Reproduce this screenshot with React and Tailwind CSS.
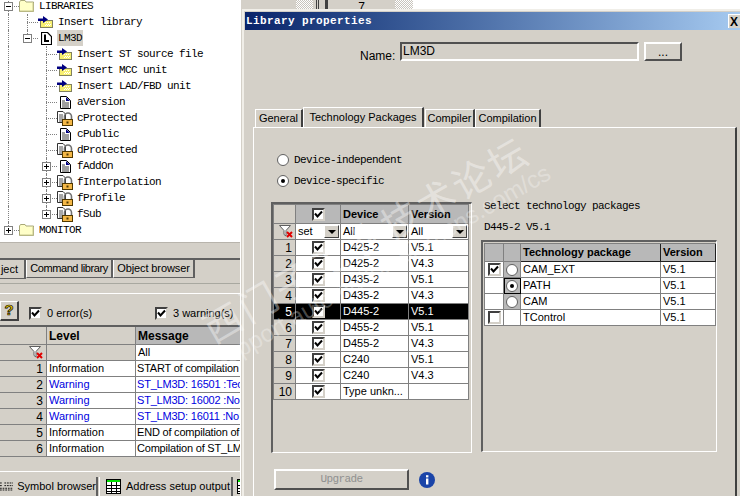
import React from "react";

const MONO = "font-['Liberation_Mono',monospace] text-[11px] tracking-[-0.6px] text-black";

const FolderIcon = () => (
  <svg width="15" height="12" viewBox="0 0 15 12" className="block">
    <path d="M0.5 2 L1.5 0.5 H6 L7 2 H14.5 V11.5 H0.5 Z" fill="#ffffc8" stroke="#a8a878" />
    <path d="M14 3 V11 H1" fill="none" stroke="#c8c890" />
  </svg>
);

const InsertIcon = () => (
  <svg width="15" height="12" viewBox="0 0 15 12" className="block">
    <rect x="2.5" y="4.5" width="12" height="7" fill="#f8f070" stroke="#808060" />
    <path d="M7 6h1v1H7zM9 6h1v1H9zM11 6h1v1h-1zM8 8h1v1H8zM10 8h1v1h-1zM12 8h1v1h-1zM7 9h1v1H7zM9 9h1v1H9zM11 9h1v1h-1z" fill="#ffffff" />
    <path d="M0 2.5 H5 V0 L10 3.5 L5 7 V5 H0 Z" fill="#000080" />
  </svg>
);

const DocIcon = () => (
  <svg width="11" height="13" viewBox="0 0 11 13" className="block ml-[3px]">
    <path d="M0.5 0.5 H6.5 L10.5 4.5 V12.5 H0.5 Z" fill="#ffffff" stroke="#000000" />
    <path d="M6 1 L10 5 H6 Z" fill="#000080" />
    <path d="M2 5h3M2 7h7M2 9h7M2 11h7" stroke="#404040" />
  </svg>
);

const LockIcon = () => (
  <svg width="16" height="15" viewBox="0 0 16 15" className="block">
    <path d="M0.5 0.5 H6 L8.5 3 V11.5 H0.5 Z" fill="#ffffff" stroke="#303030" />
    <path d="M2 4h4M2 6h4M2 8h4M2 10h3" stroke="#505050" />
    <path d="M7.5 8 V5.5 A3.5 3.5 0 0 1 14.5 5.5 V8" fill="none" stroke="#707070" strokeWidth="1.6" />
    <rect x="5.5" y="8.5" width="10" height="6" fill="#f4b848" stroke="#503800" />
    <rect x="9.5" y="10.5" width="2" height="2" fill="#503800" />
  </svg>
);

const LibIcon = () => (
  <svg width="11" height="13" viewBox="0 0 11 13" className="block ml-[3px]">
    <path d="M0.5 0.5 H6.5 L10.5 4.5 V12.5 H0.5 Z" fill="#ffffff" stroke="#000000" strokeWidth="1.2" />
    <path d="M4 2.5 V9 H8" fill="none" stroke="#000000" strokeWidth="2" />
  </svg>
);

const Expander = ({ open }) => (
  <div className="absolute left-[4px] top-[4px] z-10 flex size-[9px] items-center justify-center border border-[#808080] bg-white">
    <svg width="7" height="7" viewBox="0 0 7 7" className="block">
      <path d={open ? "M1 3.5h5" : "M1 3.5h5M3.5 1v5"} stroke="#000000" />
    </svg>
  </div>
);

const TreeRow = ({ guides = [], last, exp, icon, label, sel }) => (
  <div className="flex h-4 items-center">
    {guides.map((g, i) => (
      <div key={i} className="h-4 w-[19px] shrink-0">
        {g && <div className="ml-[8px] h-4 border-l border-dotted border-[#808080]" />}
      </div>
    ))}
    <div className="relative h-4 w-[19px] shrink-0">
      <div className={"ml-[8px] border-l border-dotted border-[#808080] " + (last ? "h-2" : "h-4")} />
      <div className="absolute left-[8px] top-[8px] w-[11px] border-t border-dotted border-[#808080]" />
      {exp && <Expander open={exp === "open"} />}
    </div>
    <div className="w-[20px] shrink-0">{icon}</div>
    <div className={"flex h-4 items-center pr-px pt-px " + MONO + (sel ? " -ml-px bg-[#d4d0c8] pl-px" : "")}>{label}</div>
  </div>
);

const Check = ({ on = true }) => (
  <div className="size-[13px] border-2 border-b-[#d4d0c8] border-l-[#404040] border-r-[#d4d0c8] border-t-[#404040] bg-white">
    {on && (
      <svg width="9" height="9" viewBox="0 0 9 9" className="block">
        <path d="M1 3.5 L3.5 6.5 L8 1.5" fill="none" stroke="#000000" strokeWidth="2" />
      </svg>
    )}
  </div>
);

const Radio = ({ on }) => (
  <div className="flex size-[12px] items-center justify-center rounded-full border border-[#606060] bg-white">
    {on && <div className="size-[4px] rounded-full bg-black" />}
  </div>
);

const FilterIcon = () => (
  <svg width="15" height="13" viewBox="0 0 15 13" className="block">
    <path d="M0.5 0.5 H11.5 L7 5.5 V11 L5 9.5 V5.5 Z" fill="#ffffff" stroke="#606060" />
    <path d="M8 7 L13 12 M13 7 L8 12" stroke="#e00000" strokeWidth="2" />
  </svg>
);

const Drop = () => (
  <div className="flex h-[13px] w-[15px] shrink-0 items-center justify-center border border-b-[#404040] border-l-white border-r-[#404040] border-t-white bg-[#d4d0c8]">
    <div className="size-0 border-x-[4px] border-t-[4px] border-x-transparent border-t-black" />
  </div>
);

const devices = [
  ["1", "D425-2", "V5.1"],
  ["2", "D425-2", "V4.3"],
  ["3", "D435-2", "V5.1"],
  ["4", "D435-2", "V4.3"],
  ["5", "D445-2", "V5.1"],
  ["6", "D455-2", "V5.1"],
  ["7", "D455-2", "V4.3"],
  ["8", "C240", "V5.1"],
  ["9", "C240", "V4.3"],
  ["10", "Type unkn...", ""],
];

const messages = [
  ["1", "Information", "START of compilation", false],
  ["2", "Warning", "ST_LM3D: 16501 :Tec", true],
  ["3", "Warning", "ST_LM3D: 16002 :No", true],
  ["4", "Warning", "ST_LM3D: 16011 :No", true],
  ["5", "Information", "END of compilation of", false],
  ["6", "Information", "Compilation of ST_LM", false],
];

const packages = [
  ["CAM_EXT", "check", "off"],
  ["PATH", "", "on"],
  ["CAM", "", "off"],
  ["TControl", "empty", ""],
];

const gridLine = "border-b border-r border-[#808080]";

const DeviceTable = () => (
  <div className="w-[196px] border-l border-t border-[#808080]">
    <div className="flex h-[19px] font-bold">
      <div className={"w-[22px] bg-[#d4d0c8] " + gridLine} />
      <div className={"flex w-[45px] items-center justify-center bg-[#b8b8b8] " + gridLine}><Check /></div>
      <div className={"flex w-[68px] items-center bg-[#b8b8b8] pl-[2px] " + gridLine}>Device</div>
      <div className={"flex w-[60px] items-center bg-[#b8b8b8] pl-[2px] " + gridLine}>Version</div>
    </div>
    <div className="flex h-4">
      <div className={"flex w-[22px] items-center justify-end bg-[#d4d0c8] pr-px " + gridLine}><FilterIcon /></div>
      <div className={"flex w-[45px] items-center justify-between bg-white pl-[2px] pr-px " + gridLine}>set<Drop /></div>
      <div className={"flex w-[68px] items-center justify-between bg-white pl-[2px] pr-px " + gridLine}>All<Drop /></div>
      <div className={"flex w-[60px] items-center justify-between bg-white pl-[2px] pr-px " + gridLine}>All<Drop /></div>
    </div>
    {devices.map(([n, dev, ver]) => {
      const sel = n === "5";
      return (
        <div key={n} className={"flex h-4 " + (sel ? "bg-black text-white" : "bg-white")}>
          <div className={"flex w-[22px] items-center justify-end pr-[3px] text-[12px] " + gridLine + (sel ? "" : " bg-[#d4d0c8]")}>{n}</div>
          <div className={"flex w-[45px] items-center justify-center " + gridLine}><Check /></div>
          <div className={"flex w-[68px] items-center pl-[2px] " + gridLine}>{dev}</div>
          <div className={"flex w-[60px] items-center pl-[2px] " + gridLine}>{ver}</div>
        </div>
      );
    })}
  </div>
);

const PackageTable = () => (
  <div className="ml-px mt-px w-[232px] border-l border-t border-[#808080]">
    <div className="flex h-[18px] font-bold">
      <div className={"w-[19px] bg-[#b8b8b8] " + gridLine} />
      <div className={"w-[17px] bg-[#b8b8b8] " + gridLine} />
      <div className="flex w-[140px] items-center border-b border-r border-[#202020] bg-[#b8b8b8] pl-[2px]">Technology package</div>
      <div className="flex w-[55px] items-center border-b border-r border-[#202020] bg-[#b8b8b8] pl-[2px]">Version</div>
    </div>
    {packages.map(([name, chk, radio]) => (
      <div key={name} className="flex h-4 bg-white">
        <div className={"flex w-[19px] items-center justify-center " + gridLine}>
          {chk && <Check on={chk === "check"} />}
        </div>
        <div className={"flex w-[17px] items-center justify-center " + gridLine + (radio ? " bg-[#b8b8b8]" : "") + (radio === "on" ? " outline outline-1 -outline-offset-1 outline-black" : "")}>
          {radio && <Radio on={radio === "on"} />}
        </div>
        <div className={"flex w-[140px] items-center pl-[2px] " + gridLine}>{name}</div>
        <div className={"flex w-[55px] items-center pl-[2px] " + gridLine}>V5.1</div>
      </div>
    ))}
  </div>
);

const MessageTable = () => (
  <div>
    <div className="flex h-[20px] border-t-2 border-[#606060] font-bold text-[12px]">
      <div className={"w-[47px] " + gridLine} />
      <div className={"flex w-[89px] items-center pl-[2px] " + gridLine}>Level</div>
      <div className="flex flex-1 items-center border-b border-[#808080] bg-[#b8b8b8] pl-[2px]">Message</div>
    </div>
    <div className="flex h-4">
      <div className={"flex w-[47px] items-center justify-end pr-[2px] " + gridLine}><FilterIcon /></div>
      <div className={"w-[89px] " + gridLine} />
      <div className="flex flex-1 items-center border-b border-[#808080] bg-white pl-[2px]">All</div>
    </div>
    {messages.map(([n, level, msg, warn]) => (
      <div key={n} className="flex h-4">
        <div className={"flex w-[47px] items-center justify-end pr-[3px] text-[12px] " + gridLine}>{n}</div>
        <div className={"flex w-[89px] items-center bg-white pl-[2px] " + gridLine + (warn ? " text-[#0000e0]" : "")}>{level}</div>
        <div className={"flex-1 overflow-hidden whitespace-nowrap border-b border-[#808080] bg-white pl-px leading-[15px] tracking-[-0.2px]" + (warn ? " text-[#0000e0]" : "")}>{msg}</div>
      </div>
    ))}
  </div>
);

const SymbolIcon = () => (
  <svg width="15" height="11" viewBox="0 0 15 11" className="block">
    <path d="M0 1.5h3M5 1.5h10M0 4.5h3M5 4.5h10M0 7.5h15M0 9.5h15" stroke="#000000" strokeDasharray="2 1" />
  </svg>
);

const AddressIcon = ({ width = 15 }) => (
  <svg width={width} height="15" viewBox={"0 0 " + width + " 15"} className="block">
    <rect x="0.5" y="0.5" width="14" height="14" fill="#ffffff" stroke="#000000" />
    <rect x="1" y="1" width="13" height="2" fill="#00e000" />
    <path d="M1 6.5h13M1 9.5h13M1 12.5h13M5.5 3v11M10.5 3v11" stroke="#000000" />
  </svg>
);

const Tree = () => (
  <div className="-mt-[2px]">
    <TreeRow exp="open" icon={<FolderIcon />} label="LIBRARIES" />
    <TreeRow guides={[true]} icon={<InsertIcon />} label="Insert library" />
    <TreeRow guides={[true]} last exp="open" icon={<LibIcon />} label="LM3D" sel />
    <TreeRow guides={[true, false]} icon={<InsertIcon />} label="Insert ST source file" />
    <TreeRow guides={[true, false]} icon={<InsertIcon />} label="Insert MCC unit" />
    <TreeRow guides={[true, false]} icon={<InsertIcon />} label="Insert LAD/FBD unit" />
    <TreeRow guides={[true, false]} icon={<DocIcon />} label="aVersion" />
    <TreeRow guides={[true, false]} icon={<LockIcon />} label="cProtected" />
    <TreeRow guides={[true, false]} icon={<DocIcon />} label="cPublic" />
    <TreeRow guides={[true, false]} icon={<LockIcon />} label="dProtected" />
    <TreeRow guides={[true, false]} exp="closed" icon={<DocIcon />} label="fAddOn" />
    <TreeRow guides={[true, false]} exp="closed" icon={<LockIcon />} label="fInterpolation" />
    <TreeRow guides={[true, false]} exp="closed" icon={<LockIcon />} label="fProfile" />
    <TreeRow guides={[true, false]} last exp="closed" icon={<LockIcon />} label="fSub" />
    <TreeRow last exp="closed" icon={<FolderIcon />} label="MONITOR" />
  </div>
);

const LeftPane = () => (
  <div className="flex w-[241px] shrink-0 flex-col overflow-hidden border-r border-white">
    <div className="h-[243px] shrink-0 overflow-hidden border-b border-[#b8b4ac] bg-white">
      <Tree />
    </div>
    <div className="mt-[15px] flex h-[21px] shrink-0 items-start overflow-hidden whitespace-nowrap border-t-2 border-[#606060]">
      <div className="flex h-[20px] w-[26px] shrink-0 items-center justify-end overflow-hidden border-b-2 border-r-2 border-[#606060] pr-[6px]">ject</div>
      <div className="flex h-[18px] w-[87px] shrink-0 items-center justify-center border-b border-l border-r-2 border-b-[#606060] border-l-white border-r-[#606060] tracking-[-0.4px]">Command library</div>
      <div className="flex h-[18px] w-[82px] shrink-0 items-center justify-center border-b border-l border-r-2 border-b-[#606060] border-l-white border-r-[#606060] tracking-[-0.1px]">Object browser</div>
    </div>
    <div className="mt-[4px] h-px shrink-0 bg-[#a8a8a0]" />
    <div className="mt-[9px] h-px shrink-0 bg-white" />
    <div className="mt-[7px] flex h-[20px] shrink-0 items-center">
      <div className="flex h-[20px] w-[19px] items-center justify-center border border-b-2 border-r-2 border-b-[#404040] border-l-white border-r-[#404040] border-t-white text-[15px] font-bold text-[#f0d000] [-webkit-text-stroke:0.7px_#000000]">?</div>
      <div className="ml-[10px] mt-[4px] flex w-[125px] items-center gap-[5px]"><Check />0 error(s)</div>
      <div className="ml-px mt-[4px] flex items-center gap-[5px]"><Check />3 warning(s)</div>
    </div>
    <div className="mt-[4px] shrink-0">
      <MessageTable />
    </div>
    <div className="mt-[14px] h-px shrink-0 bg-white" />
    <div className="mt-[5px] flex h-[19px] shrink-0 items-center overflow-hidden">
      <div className="flex h-[19px] w-[98px] shrink-0 items-center gap-[4px] whitespace-nowrap border-r-2 border-[#606060]"><SymbolIcon />Symbol browser</div>
      <div className="ml-px flex h-[19px] w-[134px] shrink-0 items-center gap-[5px] whitespace-nowrap border-l border-r-2 border-l-white border-r-[#606060] pl-[6px]"><AddressIcon />Address setup output</div>
      <div className="ml-[4px] shrink-0"><AddressIcon width={5} /></div>
    </div>
  </div>
);

const Tab = ({ active, className, children }) => (
  <div className={"flex items-center justify-center whitespace-nowrap border-l border-r-2 border-t border-l-white border-r-[#404040] border-t-white pb-[2px] text-[11px] " + (active ? "h-[21px]" : "mt-[2px] h-[19px]") + " " + className}>
    {children}
  </div>
);

const Dialog = () => (
  <div className="ml-[1px] flex min-h-0 flex-1 flex-col border-l-2 border-t-2 border-[#f0eee8]">
    <div className="ml-px mt-px flex h-[18px] shrink-0 items-center justify-between bg-gradient-to-r from-[#0a246a] to-[#a6caf0] pl-px">
      <span className="font-['Liberation_Mono',monospace] text-[11px] font-bold tracking-[0.4px] text-white">Library properties</span>
      <div className="flex h-[14px] w-[12px] items-center justify-start border-l border-t border-white bg-[#d4d0c8] pl-px text-[12px] font-bold leading-none text-black">X</div>
    </div>
    <div className="ml-[116px] mt-[12px] flex h-[19px] shrink-0 text-[12px]">
      <div className="w-[40px] pt-[5px]">Name:</div>
      <div className="w-[239px] border-2 border-b-white border-l-[#505050] border-r-white border-t-[#505050] pl-px leading-[14px]">LM3D</div>
      <div className="ml-[5px] flex w-[38px] items-center justify-center border-2 border-b-[#505050] border-l-white border-r-[#505050] border-t-white leading-none">...</div>
    </div>
    <div className="ml-[11px] mt-[46px] flex shrink-0">
      <Tab className="w-[48px]">General</Tab>
      <Tab active className="w-[121px]">Technology Packages</Tab>
      <Tab className="ml-px w-[50px]">Compiler</Tab>
      <Tab className="w-[66px]">Compilation</Tab>
    </div>
    <div className="-mt-px ml-[9px] w-[484px] flex-1 border-l border-r-2 border-t border-l-white border-r-[#404040] border-t-white">
      <div className="ml-[23px] mt-[24px] flex h-4 items-center gap-[5px]"><Radio /><span className={MONO}>Device-independent</span></div>
      <div className="ml-[23px] mt-[5px] flex h-4 items-center gap-[5px]"><Radio on /><span className={MONO}>Device-specific</span></div>
      <div className="ml-[17px] mt-[13px] flex items-start">
        <div className="h-[251px] w-[201px] border-2 border-b-[1px] border-r-[1px] border-b-white border-l-[#606060] border-r-white border-t-[#606060]">
          <DeviceTable />
        </div>
        <div className="ml-[9px]">
          <div className={"-mt-[4px] ml-[3px] flex h-4 items-center " + MONO}>Select technology packages</div>
          <div className={"ml-[3px] mt-[5px] flex h-4 items-center " + MONO}>D445-2 V5.1</div>
          <div className="mt-[5px] h-[212px] w-[236px] border-2 border-b-[1px] border-r-[1px] border-b-white border-l-[#606060] border-r-white border-t-[#606060]">
            <PackageTable />
          </div>
        </div>
      </div>
      <div className="ml-[20px] mt-[16px] flex items-center gap-[10px]">
        <div className="flex h-[21px] w-[135px] items-center justify-center border-2 border-b-[#505050] border-l-white border-r-[#505050] border-t-white font-['Liberation_Mono',monospace] text-[11px] tracking-[-0.6px] text-[#909090]">Upgrade</div>
        <svg width="16" height="16" viewBox="0 0 16 16" className="block">
          <circle cx="8" cy="8" r="8" fill="#1a44a8" />
          <rect x="7" y="6.5" width="2.4" height="6" fill="#ffffff" />
          <rect x="7" y="3.2" width="2.4" height="2.2" fill="#ffffff" />
        </svg>
      </div>
    </div>
  </div>
);

export default function App() {
  return (
    <div className="relative flex h-[496px] w-[740px] overflow-hidden bg-[#d4d0c8] font-['Liberation_Sans',Arial,sans-serif] text-[11px] text-black">
      <LeftPane />
      <div className="flex min-w-0 flex-1 flex-col">
        <div className="flex h-[9px] shrink-0 items-stretch">
          <div className="w-[55px] shrink-0" />
          <div className="w-[17px] shrink-0 bg-[repeating-conic-gradient(#ffffff_0_25%,#c8c4bc_0_50%)] bg-[length:2px_2px]" />
          <div className="ml-[3px] w-[3px] shrink-0 border-x border-[#404040]" />
          <div className="ml-[6px] w-[3px] shrink-0 bg-[#404040]" />
          <div className="w-[67px] shrink-0 overflow-hidden text-center text-[12px] leading-[14px]">7</div>
          <div className="w-[18px] shrink-0 bg-[repeating-conic-gradient(#ffffff_0_25%,#c8c4bc_0_50%)] bg-[length:2px_2px]" />
          <div className="flex-1 bg-white" />
        </div>
        <Dialog />
      </div>
      <div className="pointer-events-none absolute left-[365px] top-[238px] -translate-x-1/2 -translate-y-1/2 -rotate-30 whitespace-nowrap font-['Noto_Sans_CJK_SC',sans-serif] text-[38px] tracking-[3px] text-white/40">西门子工业技术论坛</div>
      <div className="pointer-events-none absolute left-[382px] top-[267px] -translate-x-1/2 -translate-y-1/2 -rotate-30 whitespace-nowrap text-[24px] text-white/30">support.automation.siemens.com/cs</div>
    </div>
  );
}
